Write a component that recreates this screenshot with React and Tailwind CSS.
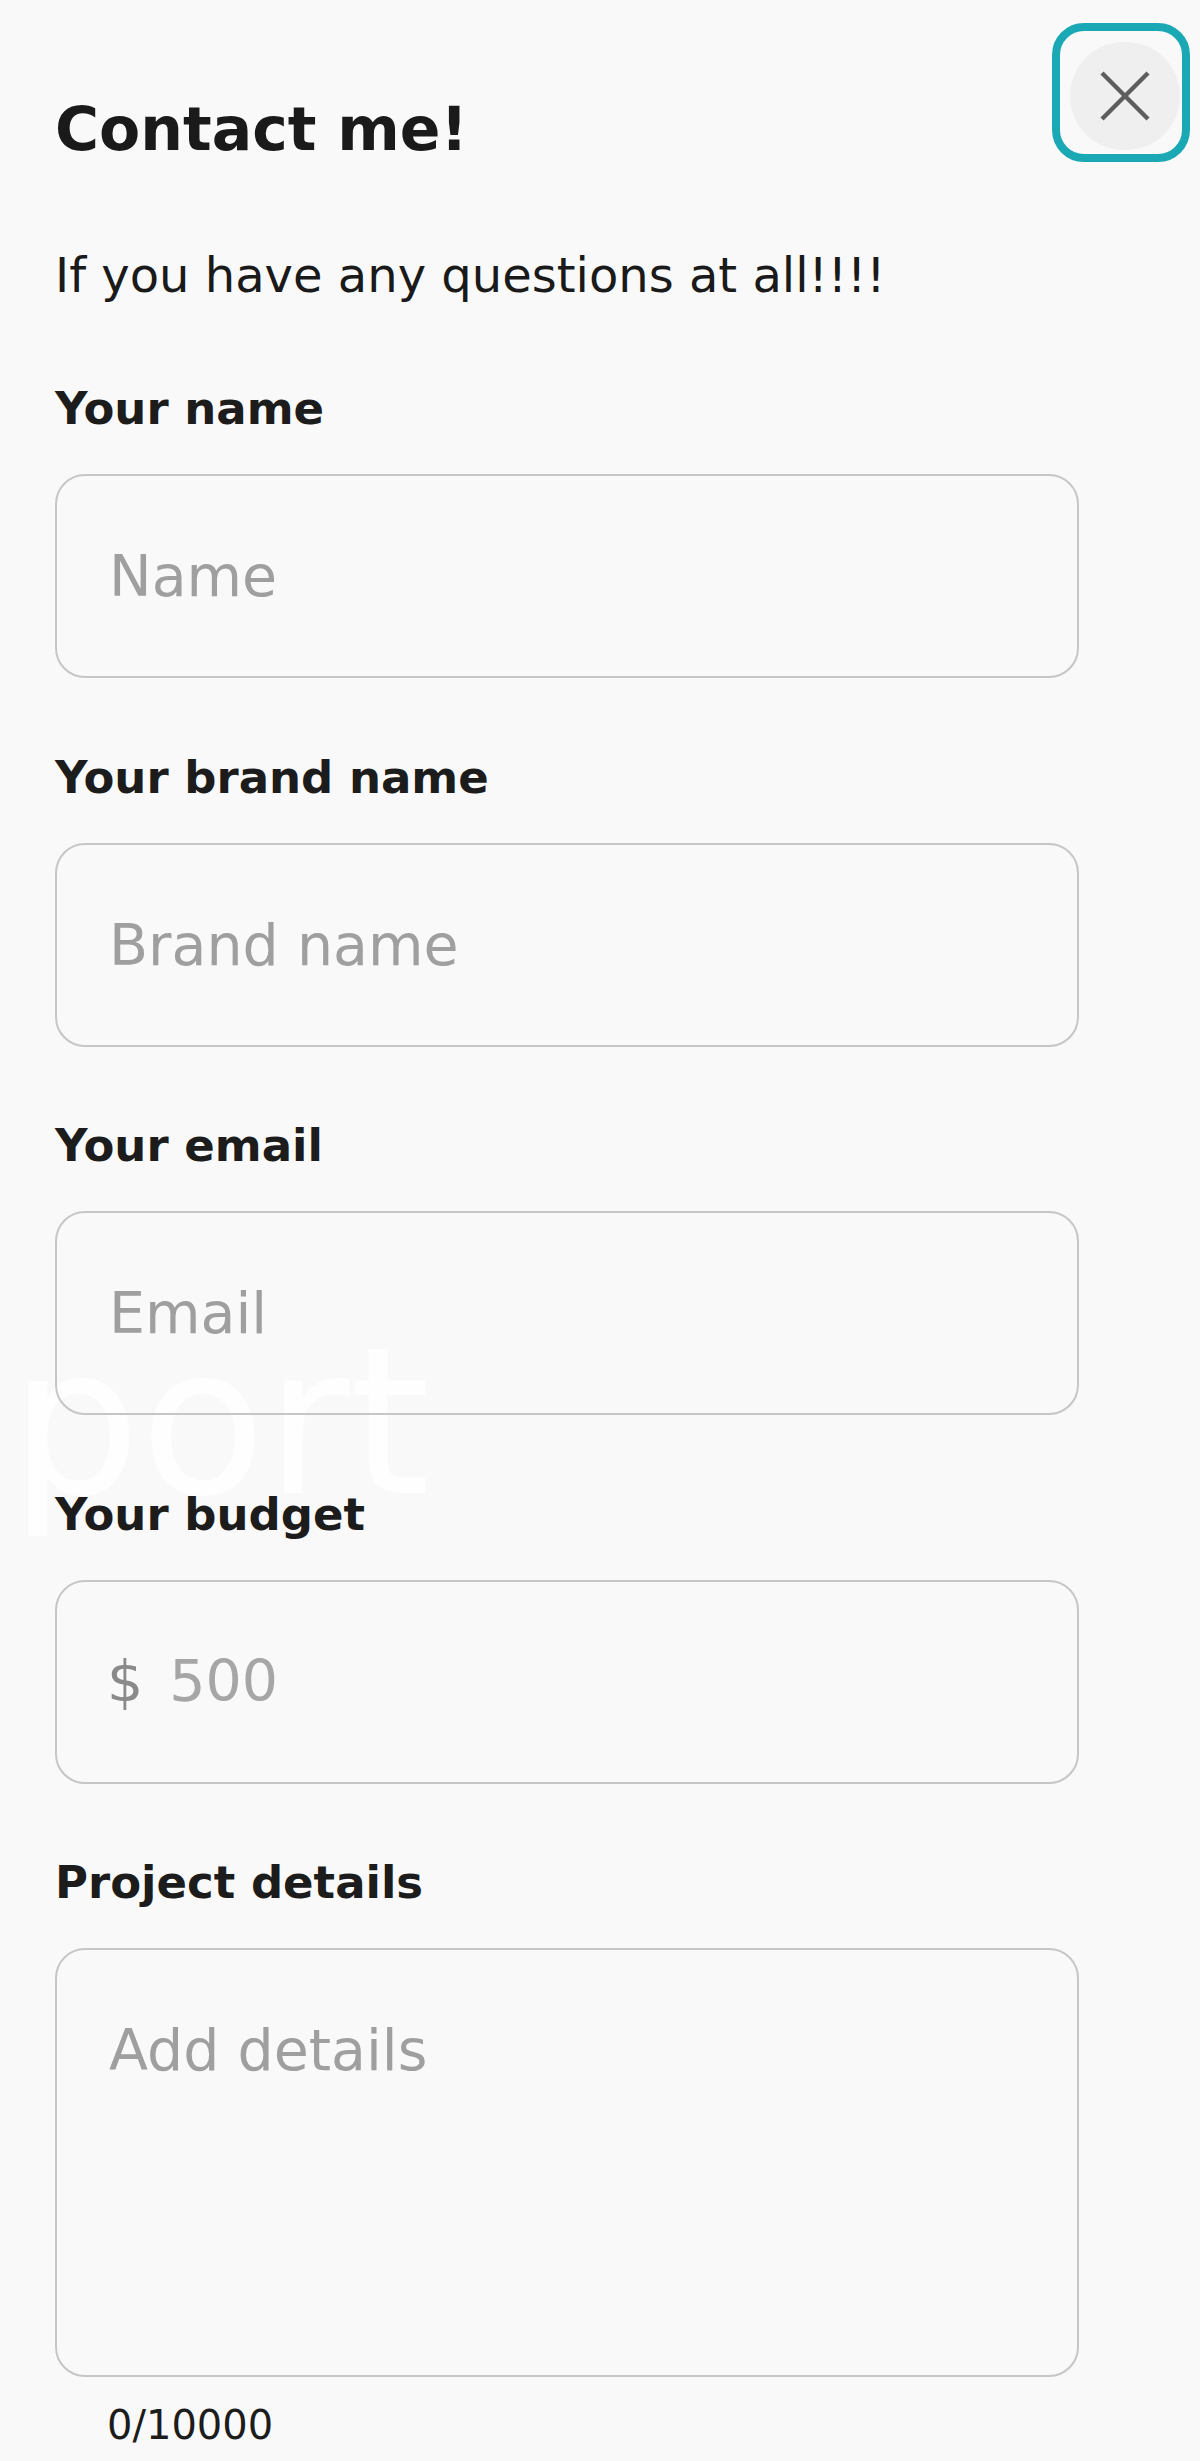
import { useState } from 'react';

const fields = [
  { label: 'Your name', placeholder: 'Name' },
  { label: 'Your brand name', placeholder: 'Brand name' },
  { label: 'Your email', placeholder: 'Email' },
];

function Field({ label, children }) {
  return (
    <div className="flex flex-col">
      <label className="text-[45px] leading-[45px] font-bold text-[#1c1c1c] mb-[43px]">{label}</label>
      {children}
    </div>
  );
}

export default function App() {
  const [details, setDetails] = useState('');

  return (
    <div className="relative w-[1200px] h-[2461px] overflow-hidden bg-[#f9f9f9] font-['DejaVu_Sans',sans-serif]">
      {/* faint page text behind the modal */}
      <div className="absolute left-[10px] top-[1320px] text-[205px] leading-[205px] text-white/80 select-none">
        port
      </div>

      <button className="absolute left-[1052px] top-[23px] w-[138px] h-[139px] border-[8px] border-[#1ba8b5] rounded-[32px] flex items-start justify-start pl-[10px] pt-[11px]">
        <span className="w-[110px] h-[108px] rounded-full bg-[#efefef] flex items-center justify-center">
          <svg width="50" height="50" viewBox="0 0 50 50">
            <line x1="2" y1="2" x2="48" y2="48" stroke="#5e5e5e" strokeWidth="4.5" />
            <line x1="48" y1="2" x2="2" y2="48" stroke="#5e5e5e" strokeWidth="4.5" />
          </svg>
        </span>
      </button>

      <div className="relative w-[1079px] pl-[55px] pt-[99px]">
        <h1 className="text-[60px] leading-[60px] font-bold text-[#1a1a1a]">Contact me!</h1>
        <p className="mt-[92px] text-[48px] leading-[48px] text-[#1a1a1a]">If you have any questions at all!!!!</p>

        <div className="mt-[87px] flex flex-col gap-[76.6px]">
          {fields.map(f => (
            <Field key={f.label} label={f.label}>
              <input
                type="text"
                placeholder={f.placeholder}
                className="w-full h-[204px] border-2 border-[#c6c6c6] rounded-[30px] bg-transparent pl-[52px] text-[57px] text-[#1a1a1a] placeholder:text-[#9f9f9f] outline-none"
              />
            </Field>
          ))}

          <Field label="Your budget">
            <div className="w-full h-[204px] border-2 border-[#c6c6c6] rounded-[30px] flex items-center pl-[50px]">
              <span className="text-[57px] text-[#8a8a8a] mr-[26px]">$</span>
              <input
                type="text"
                placeholder="500"
                className="flex-1 bg-transparent text-[57px] text-[#1a1a1a] placeholder:text-[#a6a6a6] outline-none"
              />
            </div>
          </Field>

          <Field label="Project details">
            <div className="flex flex-col">
              <textarea
                value={details}
                onChange={e => setDetails(e.target.value)}
                placeholder="Add details"
                className="w-full h-[429px] resize-none border-2 border-[#c6c6c6] rounded-[30px] bg-transparent pl-[52px] pt-[58px] text-[57px] leading-[1.5] text-[#1a1a1a] placeholder:text-[#9f9f9f] outline-none"
              />
              <span className="mt-[28px] ml-[52px] text-[40px] leading-[40px] text-[#1c1c1c]">{details.length}/10000</span>
            </div>
          </Field>
        </div>
      </div>
    </div>
  );
}
